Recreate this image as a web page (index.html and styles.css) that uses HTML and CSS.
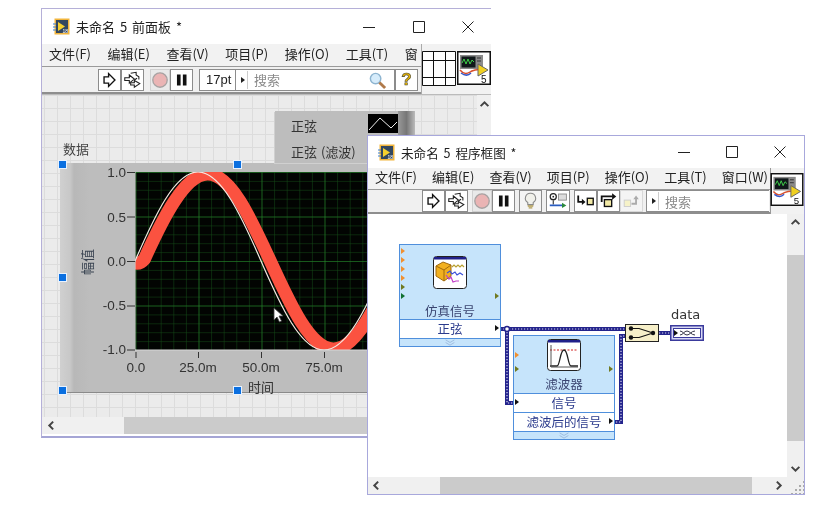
FILE: index.html
```html
<!DOCTYPE html>
<html lang="zh">
<head>
<meta charset="utf-8">
<title>LabVIEW</title>
<link rel="stylesheet" href="styles.css">
</head>
<body>
<svg class="defs" width="0" height="0">
  <defs>
    <symbol id="lv" viewBox="0 0 17 17">
      <rect x="1.500" y="0.500" width="15" height="16" fill="#f2b53c"/>
      <rect x="3" y="2" width="12" height="13" fill="#33475f"/>
      <path d="M5 4l7 4.500-7 4.500z" fill="#f5d02e"/>
      <path d="M0 6h3M0 9h3M0 12h3" stroke="#3b7fd0" stroke-width="1.200"/>
      <text x="9.500" y="14.500" class="lvt">18</text>
    </symbol>
    <symbol id="run" viewBox="0 0 22 22">
      <path d="M5 7.500h5V4l7 7-7 7v-3.500H5z" fill="#fff" stroke="#111" stroke-width="1.500"/>
    </symbol>
    <symbol id="rerun" viewBox="0 0 22 22">
      <path d="M2.500 8.500h5v-3l5.500 4.500-5.500 4.500v-3h-5z" fill="#fff" stroke="#222" stroke-width="1.200"/>
      <path d="M9 14h4v-2.500l6 3.500-6 4v-2.500H9z" fill="#fff" stroke="#222" stroke-width="1.200"/>
      <path d="M9 3.500l6-1v3l3 2v3M13 11l3-2" fill="none" stroke="#222" stroke-width="1.200"/>
    </symbol>
    <symbol id="stop" viewBox="0 0 20 20">
      <circle cx="10" cy="10" r="8" fill="#eab4b4" stroke="#a8a2a2" stroke-width="1.500"/>
    </symbol>
    <symbol id="pause" viewBox="0 0 22 22">
      <path d="M6 5h4v12H6zM12.500 5h4v12h-4z" fill="#111"/>
    </symbol>
    <symbol id="vi" viewBox="0 0 34 34">
      <rect x="0.750" y="0.750" width="32.500" height="32.500" fill="#fff" stroke="#111" stroke-width="1.500"/>
      <rect x="3" y="4" width="23" height="14" fill="#8a8a8a"/>
      <rect x="4.500" y="5.500" width="14" height="11" fill="#10181a"/>
      <path d="M5 12l2-4 2 5 2-5 2 5 2-4 2 2" fill="none" stroke="#3fd04a"/>
      <path d="M20 7h4M20 10h4" stroke="#333"/>
      <path d="M3 19c5 6 8 3 12 1s8-1 13-2" fill="none" stroke="#d8502c" stroke-width="1.500"/>
      <path d="M4 22c4 3 7 3 10 0" fill="none" stroke="#3858c8" stroke-width="1.500"/>
      <path d="M21 13l10 6-10 6z" fill="#f0d020" stroke="#666"/>
      <text x="24" y="32" class="vit">5</text>
    </symbol>
  </defs>
</svg>

<section class="window front">
  <header class="titlebar tall">
    <svg class="appicon"><use href="#lv"/></svg>
    <span class="title">未命名 5 前面板 *</span>
    <span class="winctl">
      <svg class="ctl" viewBox="0 0 14 14"><path d="M1 7.500h12" stroke="#222" fill="none"/></svg>
      <svg class="ctl" viewBox="0 0 14 14"><path d="M1.500 1.500h11v11h-11z" stroke="#222" fill="none"/></svg>
      <svg class="ctl" viewBox="0 0 14 14"><path d="M1.500 1.500l11 11M12.500 1.500l-11 11" stroke="#222" fill="none"/></svg>
    </span>
  </header>
  <div class="chrome">
    <div class="bars">
      <nav class="menu m1">
        <span>文件(F)</span><span>编辑(E)</span><span>查看(V)</span><span>项目(P)</span><span>操作(O)</span><span>工具(T)</span><span class="cut">窗</span>
      </nav>
      <div class="tools t1">
        <button class="tb"><svg><use href="#run"/></svg></button>
        <button class="tb"><svg><use href="#rerun"/></svg></button>
        <button class="tb off sp6"><svg><use href="#stop"/></svg></button>
        <button class="tb"><svg><use href="#pause"/></svg></button>
        <span class="font sp6">17pt</span>
        <span class="search s1"><i class="tri"></i><b>搜索</b>
          <svg class="mag" viewBox="0 0 20 20"><circle cx="8" cy="8" r="5.500" fill="#d6ecfb" stroke="#8db4d0" stroke-width="1.500"/><path d="M12 12l6 6" stroke="#b07a4a" stroke-width="3"/></svg>
        </span>
        <button class="tb help">?</button>
      </div>
    </div>
    <div class="panes">
      <svg class="pane" viewBox="0 0 34 35"><path d="M0.500 0.500h33v34h-33zM0.500 9.500h33M0.500 26.500h33M11.500 0.500v34M23.500 0.500v34" fill="#fff" stroke="#111"/></svg>
      <svg class="viicon"><use href="#vi"/></svg>
    </div>
  </div>
  <div class="canvas grid">
    <div class="label lb-data">数据</div>
    <div class="graph">
      <span class="ylabel">幅值</span>
      <span class="yt y1">1.0</span><span class="yt y2">0.5</span><span class="yt y3">0.0</span><span class="yt y4">-0.5</span><span class="yt y5">-1.0</span>
      <span class="xt x1">0.0</span><span class="xt x2">25.0m</span><span class="xt x3">50.0m</span><span class="xt x4">75.0m</span>
      <span class="xlabel">时间</span>
      <svg class="plot" viewBox="0 0 240 190">
        <defs>
          <pattern id="minor" width="12.600" height="8.900" patternUnits="userSpaceOnUse" x="0.500" y="0">
            <path d="M0 0v9M0 0h13" stroke="#134a16" stroke-width="1" fill="none"/>
          </pattern>
          <pattern id="major" width="63" height="44.500" patternUnits="userSpaceOnUse" x="0.500" y="0">
            <path d="M0 0v45M0 0h63" stroke="#268a2c" stroke-width="1" fill="none"/>
          </pattern>
          <clipPath id="pc"><rect x="0" y="0" width="240" height="178"/></clipPath>
        </defs>
        <rect width="240" height="178" fill="#020402"/>
        <rect width="240" height="178" fill="url(#minor)"/>
        <rect width="240" height="178" fill="url(#major)"/>
        <g clip-path="url(#pc)" fill="none">
          <path d="M0 91C4 92 7 90 9.500 87C28 46 50 2 72.500 2C95.300 2 115 44.700 135.500 89.500C156 134.300 175.700 177 198.500 177C221.300 177 241 134.300 261.500 89.500" stroke="#fb5240" stroke-width="13"/>
          <path d="M0 89C20 43 40 0 63 0C86 0 106 43 126 89C146 135 166 178 189 178C212 178 232 135 252 89" stroke="#f3e9e2" stroke-width="1.200"/>
        </g>
        <path d="M0 0v178h240" fill="none" stroke="#d8d8d8"/>
      </svg>
      <svg class="ticks" viewBox="0 0 240 200">
        <path d="M-8 .5h8M-8 45h8M-8 89.500h8M-8 134h8M-8 178h8" stroke="#333" fill="none"/>
        <path d="M1 180v6M63.500 180v6M126.500 180v6M189.500 180v6" stroke="#333" fill="none"/>
      </svg>
    </div>
    <div class="legend">
      <div class="lrow r1"><span>正弦</span><svg class="swatch" viewBox="0 0 30 19"><rect width="30" height="19" fill="#000"/><path d="M1 16L12 4l11 10 6-6" stroke="#eee" fill="none"/></svg><i class="lgrad"></i></div>
      <div class="lrow"><span>正弦 (滤波)</span></div>
    </div>
    <i class="hd h1"></i><i class="hd h2"></i><i class="hd h3"></i><i class="hd h4"></i><i class="hd h5"></i>
    <svg class="cursor" viewBox="0 0 12 16"><path d="M1 1v12l3-3 2.500 5 2-1L6 9h4z" fill="#fff" stroke="#444" stroke-width=".8"/></svg>
    <div class="vs1"><svg class="chev" viewBox="0 0 10 10"><path d="M1.500 6.500L5 3l3.500 3.500" fill="none" stroke="#444" stroke-width="1.800"/></svg></div>
  </div>
  <div class="hscroll h-front">
    <svg class="chev" viewBox="0 0 10 10"><path d="M6.500 1.500L3 5l3.500 3.500" fill="none" stroke="#444" stroke-width="1.800"/></svg>
    <i class="thumb-f"></i>
  </div>
</section>

<section class="window diagram">
  <header class="titlebar">
    <svg class="appicon"><use href="#lv"/></svg>
    <span class="title t-d">未命名 5 程序框图 *</span>
    <span class="winctl w2">
      <svg class="ctl" viewBox="0 0 14 14"><path d="M1 7.500h12" stroke="#222" fill="none"/></svg>
      <svg class="ctl" viewBox="0 0 14 14"><path d="M1.500 1.500h11v11h-11z" stroke="#222" fill="none"/></svg>
      <svg class="ctl" viewBox="0 0 14 14"><path d="M1.500 1.500l11 11M12.500 1.500l-11 11" stroke="#222" fill="none"/></svg>
    </span>
  </header>
  <div class="chrome">
    <div class="bars">
      <nav class="menu m2">
        <span>文件(F)</span><span>编辑(E)</span><span>查看(V)</span><span>项目(P)</span><span>操作(O)</span><span>工具(T)</span><span>窗口(W)</span>
      </nav>
      <div class="tools t2">
        <button class="tb"><svg><use href="#run"/></svg></button>
        <button class="tb"><svg><use href="#rerun"/></svg></button>
        <button class="tb off sp4"><svg><use href="#stop"/></svg></button>
        <button class="tb"><svg><use href="#pause"/></svg></button>
        <button class="tb sp4 dim"><svg viewBox="0 0 22 22"><path d="M11 2.500a5.500 5.500 0 0 0-3 10.200V15h6v-2.300a5.500 5.500 0 0 0-3-10.200z" fill="#f0f0ea" stroke="#8a8a8a" stroke-width="1.200"/><path d="M8 16.500h6M9 18.500h4" stroke="#b09a50" stroke-width="1.500"/></svg></button>
        <button class="tb sp4 wide"><svg viewBox="0 0 24 22"><circle cx="6" cy="6" r="3.500" fill="none" stroke="#222" stroke-width="1.400"/><circle cx="6" cy="6" r="1" fill="#222"/><path d="M6 10v5" stroke="#222" stroke-width="1.200"/><rect x="12" y="3" width="9" height="7" fill="#ddd" stroke="#888"/><path d="M2 16h14" stroke="#2a5cc0" stroke-width="2"/><path d="M16 13l5 3-5 3z" fill="#2c8a3c"/></svg></button>
        <button class="tb sp4"><svg viewBox="0 0 22 22"><path d="M3 5v7h6" fill="none" stroke="#111" stroke-width="2"/><path d="M7 8.500l4 3.500-4 3.500z" fill="#111"/><rect x="13" y="8" width="6.500" height="7" fill="#f2e9a6" stroke="#111" stroke-width="1.500"/></svg></button>
        <button class="tb"><svg viewBox="0 0 22 22"><path d="M3.500 12V6h12" fill="none" stroke="#111" stroke-width="2"/><path d="M15 2.500l4.500 3.500-4.500 3.500z" fill="#111"/><rect x="6.500" y="9.500" width="8" height="7.500" fill="#f2e9a6" stroke="#111" stroke-width="1.500"/></svg></button>
        <button class="tb off2"><svg viewBox="0 0 22 22"><rect x="3" y="10" width="7" height="7" fill="#f6f2c8" stroke="#ccc"/><path d="M11 14h5V8" fill="none" stroke="#aaa" stroke-width="2"/><path d="M13 9l3-4 3 4z" fill="#aaa"/></svg></button>
        <span class="search s2"><i class="tri"></i><b>搜索</b></span>
      </div>
    </div>
    <div class="panes p2"><svg class="viicon v2"><use href="#vi"/></svg></div>
  </div>
  <div class="lower">
    <div class="canvas white">
      <svg class="wires" viewBox="0 0 420 262">
        <g fill="none">
          <g stroke="#24248c" stroke-width="4">
            <path d="M132 115H258M139 115V189H146M245 208H253V122H258M291 119H303"/>
          </g>
          <g stroke="#d8d8f0" stroke-width="1.200" stroke-dasharray="1.200 1.800">
            <path d="M132 115H258M139 115V189H146M245 208H253V122H258M291 119H303"/>
          </g>
          <circle cx="139" cy="115" r="2.500" fill="#fff" stroke="#24248c" stroke-width="1.500"/>
        </g>
      </svg>
      <article class="node n1">
        <div class="nhead">
          <svg class="nicon" viewBox="0 0 34 33"><rect x=".5" y=".5" width="33" height="32" rx="3" fill="#fff" stroke="#222"/><rect x="1" y="1" width="32" height="2.500" fill="#20208a"/><path d="M3 10l7-4 8 3v11l-7 5-8-5z" fill="#f2b01e" stroke="#a06a10"/><path d="M3 10l8 4v11M11 14l7-5" fill="none" stroke="#a06a10"/><path d="M19 11l2-2 2 2 2-2 2 2 2-2 2 2" stroke="#b8a030" fill="none" stroke-width="1.200"/><path d="M14 17l3-2 2 3 3-2 2 3 3-2 3 2" stroke="#3a50d8" fill="none" stroke-width="1.200"/><path d="M13 19l3 4 2-2 2 5 3-1h3" stroke="#c040c8" fill="none" stroke-width="1.200"/></svg>
          <span class="ncap">仿真信号</span>
          <i class="pin o p-a"></i><i class="pin o p-b"></i><i class="pin o p-c"></i><i class="pin o p-d"></i><i class="pin d p-e"></i><i class="pin g p-f"></i><i class="pin d rt p-f"></i>
        </div>
        <div class="nrow"><span>正弦</span><i class="pin k rt"></i></div>
        <div class="nfoot"><svg viewBox="0 0 12 8"><path d="M1 1l5 3 5-3M1 4l5 3 5-3" fill="none" stroke="#9ab8dc"/></svg></div>
      </article>
      <article class="node n2">
        <div class="nhead h2n">
          <svg class="nicon ic2" viewBox="0 0 34 32"><rect x=".5" y=".5" width="33" height="31" rx="3" fill="#fff" stroke="#222"/><rect x="1" y="1" width="32" height="2.500" fill="#20208a"/><path d="M3 11h28" stroke="#d02020" stroke-dasharray="2 1.500"/><path d="M3 27h7c3 0 3-16 7-16s4 16 7 16h7" fill="none" stroke="#222" stroke-width="1.300"/><path d="M4 6v22h27" fill="none" stroke="#555"/></svg>
          <span class="ncap c2">滤波器</span>
          <i class="pin o p-g"></i><i class="pin d p-h"></i><i class="pin d rt p-h"></i>
        </div>
        <div class="nrow"><i class="pin k lf"></i><span>信号</span></div>
        <div class="nrow"><span>滤波后的信号</span><i class="pin k rt"></i></div>
        <div class="nfoot"><svg viewBox="0 0 12 8"><path d="M1 1l5 3 5-3M1 4l5 3 5-3" fill="none" stroke="#9ab8dc"/></svg></div>
      </article>
      <div class="merge"><svg viewBox="0 0 32 16"><path d="M5 3.500h8l14 4.500M5 12.500h8l14-4.500" fill="none" stroke="#111" stroke-width="1.100"/><circle cx="5" cy="3.500" r="2.200" fill="#111"/><circle cx="5" cy="12.500" r="2.200" fill="#111"/><circle cx="27" cy="8" r="2.200" fill="#111"/></svg></div>
      <div class="ind"><span class="indl">data</span><svg viewBox="0 0 34 16"><rect x=".75" y=".75" width="32.500" height="14.500" fill="#d8d8f4" stroke="#3a3a9c" stroke-width="1.500"/><rect x="3.500" y="3.500" width="27" height="9" fill="#fff" stroke="#3a3a9c"/><path d="M4 5l4 3-4 3z" fill="#111"/><path d="M10 6c3 0 4 4 7 4s4-4 8-4M10 10c3 0 4-4 7-4s4 4 8 4" fill="none" stroke="#334"/></svg></div>
    </div>
    <div class="vscroll">
      <svg class="chev" viewBox="0 0 10 10"><path d="M1.500 6.500L5 3l3.500 3.500" fill="none" stroke="#444" stroke-width="1.800"/></svg>
      <i class="vthumb"></i>
      <svg class="chev" viewBox="0 0 10 10"><path d="M1.500 3.500L5 7l3.500-3.500" fill="none" stroke="#444" stroke-width="1.800"/></svg>
    </div>
  </div>
  <div class="hscroll h-diag">
    <svg class="chev" viewBox="0 0 10 10"><path d="M6.500 1.500L3 5l3.500 3.500" fill="none" stroke="#444" stroke-width="1.800"/></svg>
    <i class="thumb-d"></i>
    <svg class="chev c-r" viewBox="0 0 10 10"><path d="M3.500 1.500L7 5l-3.500 3.500" fill="none" stroke="#444" stroke-width="1.800"/></svg>
    <i class="corner"></i>
  </div>
</section>
</body>
</html>
```
FILE: styles.css
```css
* { box-sizing: border-box; }
html, body { margin: 0; height: 100%; background: #fff; overflow: hidden; }
body { font-family: "Noto Sans CJK SC", "Noto Sans", sans-serif; font-size: 12px; color: #222; width: 822px; height: 506px; position: relative; }
.defs { position: absolute; }
.lvt { font: 5px "Liberation Sans", sans-serif; fill: #fff; }
.vit { font: 10px "Liberation Sans", sans-serif; fill: #111; }

.window { position: absolute; background: #fff; display: flex; flex-direction: column; overflow: hidden; filter: blur(.35px); }
.front { left: 41px; top: 8px; width: 450px; height: 430px; border-top: 1px solid #b5b0d8; border-left: 1px solid #b5b0d8; border-bottom: 2px solid #a5a5d5; }
.diagram { left: 367px; top: 135px; width: 438px; height: 360px; border: 1px solid #a8a8dc; }

.titlebar { height: 32px; flex: none; display: flex; align-items: center; padding-left: 10px; background: #fff; }
.titlebar.tall { height: 35px; padding-left: 11px; }
.appicon { width: 17px; height: 17px; margin-right: 6px; flex: none; }
.title { font-size: 13px; color: #222; white-space: nowrap; word-spacing: 2px; }
.t-d { font-size: 12.600px; }
.winctl { margin-left: auto; display: flex; gap: 35.500px; padding-right: 16px; align-items: center; }
.winctl.w2 { gap: 34px; padding-right: 17px; }
.ctl { width: 14px; height: 14px; }

.chrome { display: flex; flex: none; background: #f0f0f0; }
.bars { flex: 1; min-width: 0; }
.menu { display: flex; align-items: center; height: 22px; padding-bottom: 4px; background: #f2f2f2; font-size: 13px; white-space: nowrap; overflow: hidden; color: #222; }
.m1 { width: 379px; padding-left: 7px; gap: 16.500px; }
.m2 { padding-left: 7px; height: 21px; gap: 15px; }
.tools { display: flex; align-items: center; height: 28px; border-top: 1px solid #9a9a9a; border-bottom: 2px solid #8e8e8e; background: #f0f0f0; }
.t1 { padding-left: 56px; width: 379px; }
.t2 { padding-left: 54px; height: 25px; }
.tb { width: 23px; height: 22px; padding: 0; margin: 0; border: 1px solid #8c8c8c; background: #fff; display: flex; align-items: center; justify-content: center; flex: none; }
.tb svg { width: 21px; height: 20px; }
.tb.wide { width: 24px; }
.tb.off { background: #e9e9e9; width: 20px; border-color: #d0d0d0; }
.tb.off svg { width: 18px; height: 18px; }
.tb.dim { background: #f4f4f4; }
.tb.off2 { background: #f4f4f4; border-color: #d8d8d8; }
.sp6 { margin-left: 6px; }
.sp4 { margin-left: 4px; }
.font { width: 36px; height: 22px; border: 1px solid #8c8c8c; border-right: 0; background: #fff; font: 13px/20px "Liberation Sans", sans-serif; padding-left: 6px; color: #222; overflow: hidden; }
.search { display: flex; align-items: center; height: 22px; background: #fff; border: 1px solid #8c8c8c; position: relative; flex: none; }
.s1 { width: 160px; }
.s2 { width: 123px; margin-left: 3px; border-right: 0; }
.tri { width: 10px; height: 18px; border-right: 1px solid #ccc; position: relative; display: block; margin-left: 2px; }
.tri::after { content: ""; position: absolute; left: 3px; top: 6px; border: 3px solid transparent; border-left: 4px solid #222; }
.search b { font-weight: 400; color: #8a8a8a; font-size: 13px; margin-left: 6px; }
.mag { position: absolute; right: 7px; top: 1px; width: 19px; height: 19px; }
.help { font: 700 17px "Liberation Sans", sans-serif; color: #e8b400; -webkit-text-stroke: .6px #443; }
.panes { display: flex; flex: none; width: 70px; align-items: flex-start; padding-top: 7px; background: #f2f2f2; border-left: 1px solid #aaa; gap: 1px; }
.pane { width: 34px; height: 35px; flex: none; }
.viicon { width: 34px; height: 34px; flex: none; }
.panes.p2 { width: 34px; border-left: 1px solid #999; padding-top: 5px; height: 46px; gap: 0; }
.v2 { height: 33px; margin-left: -1px; }

.canvas { position: relative; flex: 1; min-height: 0; overflow: hidden; }
.grid { background-color: #ebebeb; background-image: linear-gradient(#dcdcdc 1px, transparent 1px), linear-gradient(90deg, #dcdcdc 1px, transparent 1px); background-size: 13px 13px; background-position: 2px 0; border-top: 1px solid #bbb; }
.white { background: #fff; }

.label { position: absolute; font-size: 13px; color: #444; }
.lb-data { left: 21px; top: 44px; }
.graph { position: absolute; left: 18px; top: 68px; width: 420px; height: 230px; background: linear-gradient(90deg, #d0d0d0 0, #c8c8c8 10px, #b8b8b8 14px, #bdbdbd 30px); border-bottom: 1px solid #8a8a8a; }
.plot { position: absolute; left: 75px; top: 9px; width: 240px; height: 190px; }
.ticks { position: absolute; left: 75px; top: 9px; width: 240px; height: 200px; overflow: visible; }
.yt, .xt { position: absolute; font: 13.500px/15px "Liberation Sans", sans-serif; color: #333; }
.yt { right: 354px; }
.y1 { top: 2px; } .y2 { top: 47px; } .y3 { top: 91px; } .y4 { top: 135px; } .y5 { top: 179px; }
.xt { top: 197px; width: 60px; text-align: center; }
.x1 { left: 46px; } .x2 { left: 108px; } .x3 { left: 171px; } .x4 { left: 234px; }
.ylabel { position: absolute; left: 19px; top: 86px; writing-mode: vertical-rl; text-orientation: sideways; transform: rotate(180deg); font-size: 13px; line-height: 16px; color: #3a4452; }
.xlabel { position: absolute; left: 188px; top: 217px; font-size: 13px; color: #333; line-height: 13px; }
.legend { position: absolute; left: 233px; top: 16px; width: 140px; height: 52px; background: #bdbdbd; padding: 3px 0 0 16px; box-shadow: -1px 1px 0 #d0d0d0; }
.lrow { display: flex; align-items: center; height: 25px; font-size: 13px; color: #333; position: relative; word-spacing: 1px; }
.r1 { height: 22px; margin-bottom: 3px; }
.swatch { position: absolute; left: 77px; top: 0; width: 30px; height: 19px; }
.lgrad { position: absolute; left: 107px; top: -3px; width: 17px; height: 25px; background: linear-gradient(90deg, #999, #777 50%, #bbb); }
.hd { position: absolute; width: 9px; height: 9px; background: #0a6fe0; border: 1px solid #e8f2ff; }
.h1 { left: 16px; top: 65px; } .h2 { left: 191px; top: 65px; }
.h3 { left: 16px; top: 178px; } .h4 { left: 16px; top: 291px; } .h5 { left: 191px; top: 291px; }
.cursor { position: absolute; left: 231px; top: 212px; width: 12px; height: 16px; }
.vs1 { position: absolute; right: 0; top: 0; width: 14px; height: 100%; background: #f0f0f0; display: flex; justify-content: center; padding-top: 4px; }
.chev { width: 11px; height: 11px; flex: none; }

.hscroll { height: 17px; flex: none; display: flex; align-items: center; background: #f0f0f0; position: relative; }
.h-front { padding-left: 4px; margin-bottom: 2px; }
.thumb-f { position: absolute; left: 82px; top: 0; bottom: 0; right: 0; background: #cbcbcb; }
.h-diag { padding-left: 3px; }
.thumb-d { margin-left: 58px; width: 312px; height: 17px; background: #cbcbcb; }
.c-r { margin-left: 21px; }
.corner { position: absolute; right: 0; bottom: 0; width: 14px; height: 14px; background-image: radial-gradient(#aaa 1px, transparent 1.200px); background-size: 4px 4px; clip-path: polygon(100% 0, 100% 100%, 0 100%); }

.lower { flex: 1; min-height: 0; display: flex; }
.vscroll { width: 17px; flex: none; background: #f0f0f0; display: flex; flex-direction: column; align-items: center; padding: 3px 0; }
.vthumb { width: 100%; margin-top: 27px; height: 186px; margin-bottom: auto; background: #cbcbcb; }

.wires { position: absolute; left: 0; top: 0; width: 420px; height: 262px; }
.node { position: absolute; width: 102px; background: #c6e4fb; border: 1px solid #4f8fdc; display: flex; flex-direction: column; }
.n1 { left: 31px; top: 30px; }
.n2 { left: 145px; top: 121px; }
.nhead { height: 74px; position: relative; display: flex; flex-direction: column; align-items: center; padding-top: 11px; }
.h2n { height: 57px; padding-top: 3px; }
.nicon { width: 34px; height: 33px; flex: none; }
.ic2 { height: 32px; }
.ncap { font-size: 12.500px; line-height: 16px; margin-top: 14px; color: #3a4470; }
.c2 { margin-top: 5px; }
.nrow { height: 19px; background: #fff; border-top: 1px solid #4f8fdc; text-align: center; font-size: 12.500px; line-height: 18px; color: #2a3a8c; position: relative; }
.nfoot { height: 8px; border-top: 1px solid #4f8fdc; display: flex; justify-content: center; }
.nfoot svg { width: 12px; height: 7px; }
.pin { position: absolute; left: 1px; width: 0; height: 0; border: 3px solid transparent; border-left: 4px solid #f09030; }
.pin.d { border-left-color: #707a20; }
.pin.g { border-left-color: #107030; }
.pin.k { border-left-color: #111; top: 5px; }
.pin.rt { left: auto; right: -2px; }
.pin.lf { left: 1px; }
.p-a { top: 3px; } .p-b { top: 12px; } .p-c { top: 21px; } .p-d { top: 30px; } .p-e { top: 39px; } .p-f { top: 48px; } .p-g { top: 16px; } .p-h { top: 30px; }
.merge { position: absolute; left: 257px; top: 110px; width: 34px; height: 18px; background: #f6efc8; border: 1px solid #222; display: flex; }
.merge svg { width: 32px; height: 16px; }
.ind { position: absolute; left: 302px; top: 111px; width: 34px; height: 16px; }
.ind svg { width: 34px; height: 16px; display: block; }
.indl { position: absolute; left: 1px; top: -18px; font: 13px/16px "DejaVu Sans", sans-serif; color: #333; }
```
